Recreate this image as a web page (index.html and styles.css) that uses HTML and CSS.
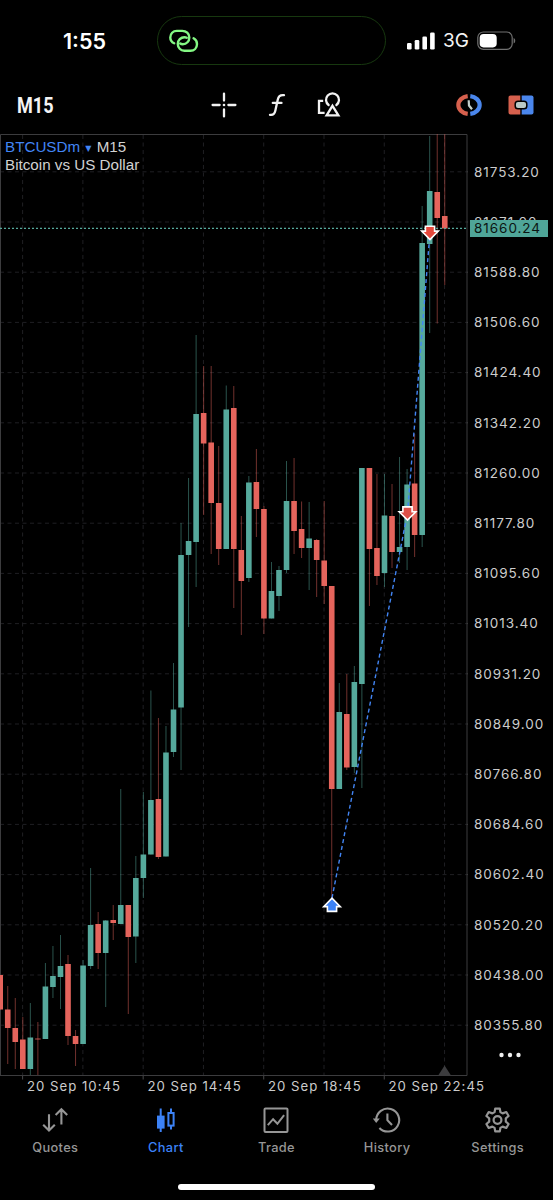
FILE: index.html
```html
<!DOCTYPE html>
<html lang="en">
<head>
  <meta charset="UTF-8">
  <meta name="viewport" content="width=device-width, initial-scale=1.0">
  <title>BTCUSDm M15</title>
  <link rel="stylesheet" href="styles.css">
</head>
<body>
  <div class="status-bar">
    <div class="clock">1:55</div>
    <div class="island">
      <svg width="30" height="24" viewBox="0 0 30 24" fill="none" stroke="#84f784" stroke-width="2.4" stroke-linecap="round">
        <path d="M5.2 14.3C2.6 13 1.3 11 1.3 8.4C1.3 4.6 4 1.9 7.8 1.9H13.2C17.2 1.9 20.3 4.6 20.3 8.4C20.3 12.2 17.6 15.2 13.8 15.2C12.6 15.2 11.7 14.9 11.2 14.5"/>
        <path d="M24.6 9.3C26.5 10.3 28 12.4 28 15C28 18.9 25.2 21.7 21.4 21.7H15.4C11.6 21.7 8.8 18.8 8.8 15C8.8 11.2 11.8 8.2 15.4 8.2C16.4 8.2 17.2 8.4 17.8 8.7"/>
      </svg>
    </div>
    <div class="signals">
      <svg width="29" height="18" viewBox="0 0 29 18" fill="#fff">
        <rect x="0" y="11" width="4.6" height="6.5" rx="1.3"/>
        <rect x="7.7" y="8" width="4.6" height="9.5" rx="1.3"/>
        <rect x="15.4" y="4.5" width="4.6" height="13" rx="1.3"/>
        <rect x="23.1" y="0.5" width="4.6" height="17" rx="1.3"/>
      </svg>
      <span class="network">3G</span>
      <svg width="40" height="20" viewBox="0 0 40 20">
        <rect x="0.8" y="1" width="34.4" height="17.4" rx="5.6" fill="none" stroke="#717171" stroke-width="1.2"/>
        <rect x="2.7" y="3" width="17" height="13.4" rx="3.8" fill="#fff"/>
        <path d="M36.6 7v5.5c2.2-.8 2.2-4.7 0-5.5z" fill="#717171"/>
      </svg>
    </div>
  </div>

  <div class="toolbar">
    <div class="timeframe">M15</div>
    <div class="tools">
      <svg width="26" height="26" viewBox="0 0 26 26" stroke="#f2f2f2" stroke-width="2.3" stroke-linecap="round">
        <path d="M13 1.6v7M13 17.4v7M1.6 13h7M17.4 13h7"/>
        <circle cx="13" cy="13" r="1.3" fill="#f2f2f2" stroke="none"/>
      </svg>
      <svg width="18" height="24" viewBox="0 0 18 24" fill="none" stroke="#f2f2f2" stroke-width="2.3" stroke-linecap="round">
        <path d="M2 21.8C5 22.3 6.6 21 7.3 17.8L9.8 6.5C10.5 3 12 1.7 16 2.2M4.8 9.9H13.5"/>
      </svg>
      <svg width="24" height="26" viewBox="0 0 24 26" fill="none" stroke="#f2f2f2" stroke-width="2.3">
        <path d="M6.2 8.8H2V20.8H7.6"/>
        <path d="M11.6 13A6.5 6.5 0 1 1 19.4 13" stroke-linecap="round"/>
        <path d="M15.5 13.8L21.4 23.4H9.6Z"/>
      </svg>
    </div>
    <div class="trade-tools">
      <svg width="26" height="22" viewBox="0 0 26 22" fill="none">
        <path d="M11.7 2.1A11 9 0 0 0 11.7 19.9" stroke="#d6604d" stroke-width="4.2"/>
        <path d="M14.3 2.1A11 9 0 0 1 14.3 19.9" stroke="#4a86ec" stroke-width="4.2"/>
        <path d="M12.7 6.2L13 11.5L16 15.3" stroke="#c3cfcb" stroke-width="2.2"/>
      </svg>
      <svg width="26" height="20" viewBox="0 0 26 20">
        <path d="M2.5.5H12.3V19.5H2.5A2 2 0 0 1 .5 17.5V2.5A2 2 0 0 1 2.5.5Z" fill="#d6604d"/>
        <path d="M13.7.5H23.5A2 2 0 0 1 25.5 2.5V17.5A2 2 0 0 1 23.5 19.5H13.7Z" fill="#4a86ec"/>
        <rect x="7.2" y="6.2" width="11.6" height="7.6" rx="2.8" fill="#b9c9c6" stroke="#000" stroke-width="1.5"/>
      </svg>
    </div>
  </div>

  <div class="chart">
    <div class="plot">
      <svg id="plot" width="468" height="950" viewBox="0 130 468 950"></svg>
      <div class="symbol">
        <div><span class="ticker">BTCUSDm <i>▼</i></span> M15</div>
        <div>Bitcoin vs US Dollar</div>
      </div>
    </div>
    <div class="prices" id="prices">
      <div class="last-price">81660.24</div>
      <svg class="more" width="24" height="6" viewBox="0 0 24 6" fill="#eee">
        <circle cx="3.5" cy="3" r="2.2"/><circle cx="12" cy="3" r="2.2"/><circle cx="20.5" cy="3" r="2.2"/>
      </svg>
    </div>
  </div>

  <div class="times">
    <span>20 Sep 10:45</span>
    <span>20 Sep 14:45</span>
    <span>20 Sep 18:45</span>
    <span>20 Sep 22:45</span>
  </div>

  <div class="tabs">
    <div class="tab">
      <svg width="26" height="26" viewBox="0 0 26 26" fill="none" stroke="#969696" stroke-width="2.1">
        <path d="M7 7.3V23.5M1.2 17.8L7 23.6L12.8 17.8"/>
        <path d="M19.4 17.5V2.2M13.6 8L19.4 2.2L25.2 8"/>
      </svg>
      <span>Quotes</span>
    </div>
    <div class="tab active">
      <svg width="26" height="26" viewBox="0 0 26 26" fill="none" stroke="#3c82f6" stroke-width="2">
        <path d="M7.7 1.5V25M18 1.5V6M18 19V22.5"/>
        <rect x="5" y="9.6" width="5.6" height="11" fill="#3c82f6"/>
        <rect x="15.4" y="6" width="5.2" height="12.6"/>
      </svg>
      <span>Chart</span>
    </div>
    <div class="tab">
      <svg width="26" height="26" viewBox="0 0 26 26" fill="none" stroke="#969696" stroke-width="2">
        <rect x="1.5" y="1.5" width="23" height="23.4" rx="1"/>
        <path d="M4.8 18.2L10.1 12.2L14.4 16.8L21.1 8.2"/>
      </svg>
      <span>Trade</span>
    </div>
    <div class="tab">
      <svg width="28" height="26" viewBox="0 0 28 26" fill="none" stroke="#969696" stroke-width="2.1">
        <path d="M3.2 13A11.5 11.5 0 1 1 6.4 21"/>
        <path d="M-.2 11.6H6.8L3.2 16Z" fill="#969696" stroke="none"/>
        <path d="M14.4 6.6V13.2L19 18"/>
      </svg>
      <span>History</span>
    </div>
    <div class="tab">
      <svg width="26" height="26" viewBox="0 0 26 26" fill="none" stroke="#969696" stroke-width="2.2" stroke-linejoin="round">
        <path d="M10.2 1.6H14.8L15.4 5.1L17.6 6.4L21.3 5L23.6 9L20.8 11.3V14.7L23.6 17L21.3 21L17.6 19.6L15.4 20.9L14.8 24.4H10.2L9.6 20.9L7.4 19.6L3.7 21L1.4 17L4.2 14.7V11.3L1.4 9L3.7 5L7.4 6.4L9.6 5.1Z"/>
        <circle cx="12.5" cy="13" r="3.9"/>
      </svg>
      <span>Settings</span>
    </div>
  </div>
  <div class="home-indicator"></div>

  <script src="chart.js"></script>
</body>
</html>
```
FILE: styles.css
```css
* {
  margin: 0;
  padding: 0;
  box-sizing: border-box;
}

body {
  width: 553px;
  height: 1200px;
  background: #000;
  color: #ccc;
  font-family: Inter, Roboto, sans-serif;
  overflow: hidden;
}

svg {
  display: block;
  flex: none;
}

.status-bar {
  display: flex;
  height: 80px;
  padding-top: 16px;
}

.clock {
  width: 157px;
  padding-left: 63px;
  color: #fff;
  font-size: 21.5px;
  font-weight: 600;
  line-height: 51px;
}

.island {
  display: flex;
  align-items: center;
  width: 229px;
  height: 49px;
  padding-left: 11px;
  border: 1px solid #17380f;
  border-radius: 25px;
}

.signals {
  display: flex;
  align-items: center;
  height: 49px;
  padding-left: 21px;
}

.network {
  width: 41px;
  padding-left: 7px;
  color: #f4f4f4;
  font-size: 19px;
  font-weight: 400;
  line-height: 24px;
}

.toolbar {
  display: flex;
  align-items: center;
  justify-content: space-between;
  height: 50px;
  padding: 0 19px 0 17px;
}

.timeframe {
  width: 150px;
  color: #f4f4f4;
  font-family: Roboto, sans-serif;
  font-size: 22px;
  font-weight: 700;
  transform: scaleX(0.82);
  transform-origin: left;
}

.tools {
  display: flex;
  align-items: center;
  gap: 31px;
  margin-right: 72px;
}

.trade-tools {
  display: flex;
  align-items: center;
  gap: 26px;
}

.chart {
  display: flex;
  height: 948px;
}

.plot {
  position: relative;
  width: 468px;
}

.symbol {
  position: absolute;
  top: 8px;
  left: 5px;
  color: #d2d2d2;
  font-family: "Liberation Sans", Arial, sans-serif;
  font-size: 15.2px;
  line-height: 18px;
}

.ticker {
  color: #4285f4;
}

.ticker i {
  margin: 0 1px 0 1px;
  font-family: "DejaVu Sans", sans-serif;
  font-size: 8px;
  font-style: normal;
  line-height: 8px;
  vertical-align: 1px;
}

.prices {
  position: relative;
  flex: 1;
  padding: 16.7px 0 0 6px;
  font-size: 13.5px;
  letter-spacing: 0.95px;
}

.price {
  height: 50.2px;
  line-height: 50px;
}

.last-price {
  position: absolute;
  top: 90px;
  left: 2px;
  width: 78px;
  height: 17px;
  padding-left: 4px;
  background: #4fa598;
  color: #0b1412;
  line-height: 17px;
}

.more {
  position: absolute;
  top: 922px;
  left: 30px;
}

.times {
  display: flex;
  height: 20px;
  padding-left: 27px;
  font-size: 13.2px;
  letter-spacing: 1px;
  line-height: 16px;
}

.times span {
  width: 120.5px;
  white-space: nowrap;
}

.tabs {
  display: flex;
  height: 78px;
  padding-top: 9px;
}

.tab {
  display: flex;
  flex: 1;
  flex-direction: column;
  align-items: center;
  gap: 6px;
  color: #969696;
  font-size: 12.8px;
  font-weight: 500;
  letter-spacing: 0.35px;
  line-height: 18px;
}

.tab.active {
  color: #3c82f6;
}

.home-indicator {
  width: 197px;
  height: 6px;
  margin: 8px auto 0;
  border-radius: 3px;
  background: #fff;
}
```
FILE: chart.js
```js
const UP = '#56a99c';
const DOWN = '#e5645c';
const STEP = 7.535;

// [direction, high, body top, body bottom, low]
const candles = [
  ['d', 975, 975, 1009.5, 1009.5], ['d', 986, 1009.5, 1028, 1064], ['d', 998, 1028, 1042, 1069],
  ['d', 1017, 1039.5, 1069, 1069], ['u', 1003, 1037.5, 1069, 1075], ['d', 1022, 1038.6, 1039.4, 1075],
  ['u', 963, 986.5, 1039, 1039], ['u', 946, 976, 987, 998], ['u', 935, 966, 977, 1009],
  ['d', 955, 964, 1036, 1045], ['d', 1030, 1036, 1044, 1066], ['u', 960, 965.5, 1044, 1044],
  ['u', 868, 925, 966, 969], ['d', 912, 924, 953, 969], ['u', 920, 920.5, 953, 1007],
  ['d', 905, 920, 923, 940], ['u', 789, 905, 924, 924], ['d', 905, 905, 937, 1014],
  ['u', 856, 878, 936.5, 963], ['u', 792, 854.5, 878, 898], ['u', 690.5, 800, 854.5, 854.5],
  ['d', 718, 799, 857, 859], ['u', 726, 752.5, 856.5, 856.5], ['u', 663, 709.5, 752, 757],
  ['u', 523, 555, 707.5, 770], ['u', 478, 541, 555, 627], ['u', 335, 414, 542, 587],
  ['d', 366, 413, 443.5, 515], ['d', 366, 442.5, 503, 554], ['d', 446, 503, 549, 565],
  ['u', 385.5, 409.5, 549, 549], ['d', 386, 408, 549, 608], ['d', 516, 550, 581, 635],
  ['u', 476, 482.5, 578, 582], ['d', 449, 482, 509, 537], ['d', 506, 509, 618.5, 634],
  ['u', 562, 591, 618.5, 618.5], ['u', 566, 570, 596, 611], ['u', 461, 501, 570, 573],
  ['d', 458, 501, 531, 554], ['d', 501.5, 529, 548, 558], ['u', 502, 538.5, 548, 590],
  ['d', 539, 540, 560, 597], ['d', 501, 560.5, 586, 604], ['d', 586, 586, 789, 898],
  ['u', 683, 712, 789, 789], ['d', 674, 714, 767.5, 770], ['u', 666, 682, 767, 773],
  ['u', 468, 468, 684, 788], ['d', 468, 468, 549, 606], ['d', 474, 548, 576, 585],
  ['u', 474, 515.5, 573, 587], ['d', 484, 516, 552, 568], ['u', 457, 547, 552, 563],
  ['u', 469, 484.5, 547, 570], ['d', 434, 483.5, 535, 557], ['u', 206, 243, 535, 547],
  ['u', 136, 191, 244, 333], ['d', 134, 192, 218, 323.5], ['d', 134, 216, 228.5, 285]
];

const arrow = (x, y, color, flip) =>
  `<path transform="translate(${x} ${y}) scale(1 ${flip ? -1 : 1})" d="M-4.6 -6.4H4.6V-1.6H8.3L0 6.8L-8.3 -1.6H-4.6Z" fill="${color}" stroke="#fff" stroke-width="1.6"/>`;

let svg = '';

// grid
for (let i = 0; i < 18; i++) {
  const y = 171.8 + i * 50.2;
  svg += `<path d="M0 ${y}H467" stroke="#1f1f23" stroke-dasharray="4 3.5"/>`;
  svg += `<path d="M467 ${y}h4" stroke="#3c3c3e"/>`;
}
for (let i = 0; i < 8; i++) {
  const x = 22.6 + i * STEP * 8;
  svg += `<path d="M${x} 135V1075" stroke="#1f1f23" stroke-dasharray="4 3.5"/>`;
  if (i % 2 === 0) svg += `<path d="M${x} 1076v3.5" stroke="#48484a"/>`;
}
svg += '<path d="M0.5 1075.5V134.5H467V1075.5H0" fill="none" stroke="#3c3c3e"/>';
svg += '<path d="M438.5 1075L444.6 1065.5L450.7 1075Z" fill="#3c3c3e"/>';

// candles
candles.forEach(([dir, high, top, bottom, low], i) => {
  const x = i * STEP + 0.2;
  const color = dir === 'u' ? UP : DOWN;
  svg += `<path d="M${x} ${high}V${low}" stroke="${color}" stroke-width="0.9" opacity="0.55"/>`;
  svg += `<rect x="${x - 2.8}" y="${top}" width="5.6" height="${bottom - top}" fill="${color}"/>`;
});

// last price and deals
svg += `<path d="M0 228.3H467" stroke="${UP}" stroke-width="1.3" stroke-dasharray="2 2"/>`;
svg += '<path d="M332 898L407.5 513L430 232" fill="none" stroke="#4285f4" stroke-width="1.4" stroke-dasharray="4 3"/>';
svg += arrow(407.5, 513.3, '#dc5048');
svg += arrow(430, 232.7, '#e5493c');
svg += arrow(332, 905, '#3c82f6', true);
document.getElementById('plot').innerHTML = svg;

// price scale
const prices = document.getElementById('prices');
const lastPrice = prices.querySelector('.last-price');
for (let i = 0; i < 18; i++) {
  const row = document.createElement('div');
  row.className = 'price';
  row.textContent = (81753.2 - i * 82.2).toFixed(2);
  prices.insertBefore(row, lastPrice);
}
```
